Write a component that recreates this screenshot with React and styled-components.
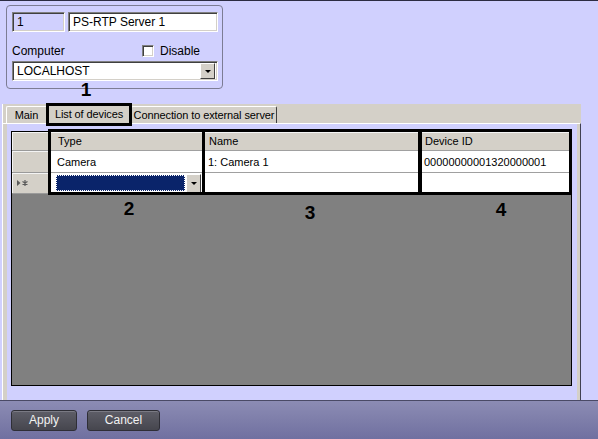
import React from 'react'
import styled, { createGlobalStyle } from 'styled-components'

const GlobalStyle = createGlobalStyle`
  html, body {
    margin: 0;
    padding: 0;
    background: #d0d0fe;
  }
  body {
    font-family: "Liberation Sans", Arial, sans-serif;
    font-size: 11px;
    color: #000;
  }
`

const columns = [
    { key: 'type', title: 'Type', width: 153, pad: 7 },
    { key: 'name', title: 'Name', width: 217, pad: 5 },
    { key: 'id', title: 'Device ID', width: 150, pad: 4 },
]

const rows = [
    { type: 'Camera', name: '1: Camera 1', id: '00000000001320000001' },
]

const tabs = [
    { title: 'Main', width: 41 },
    { title: 'List of devices', width: 84, active: true },
    { title: 'Connection to external server', width: 146 },
]

const App = () => {
    return <Window>
        <GlobalStyle />
        <Body>
            <GroupBox>
                <FieldRow>
                    <TextField w={53} disabled>1</TextField>
                    <TextField w={150}>PS-RTP Server 1</TextField>
                </FieldRow>
                <CheckRow>
                    <Label>Computer</Label>
                    <CheckBox />
                    <span>Disable</span>
                </CheckRow>
                <Combo>
                    <ComboText>LOCALHOST</ComboText>
                    <DropButton h={16}><Arrow /></DropButton>
                </Combo>
            </GroupBox>
            <Callout x={80} y={79}>1</Callout>

            <TabControl>
                <TabStrip>
                    {tabs.map(t => <Tab key={t.title} w={t.width} active={t.active} last={t.title.startsWith('Conn')}>{t.title}</Tab>)}
                </TabStrip>
                <TabMark />
                <TabPage>
                    <Grid>
                        <GridTable>
                            <RowHead header />
                            {columns.map(c => <HeadCell key={c.key} pad={c.pad}>{c.title}</HeadCell>)}

                            {rows.map((r, i) => <React.Fragment key={i}>
                                <RowHead />
                                {columns.map(c => <Cell key={c.key} pad={c.pad}>{r[c.key]}</Cell>)}
                            </React.Fragment>)}

                            <RowHead last>
                                <svg width="12" height="8" viewBox="0 0 12 8">
                                    <path d="M0 1 L3.5 4 L0 7 Z" fill="#5a5a5a" />
                                    <path d="M8 1 V7 M5.5 2.5 L10.5 5.5 M10.5 2.5 L5.5 5.5" stroke="#5a5a5a" strokeWidth="1.2" />
                                </svg>
                            </RowHead>
                            <EditCell>
                                <EditBox />
                                <DropButton h={19}><Arrow /></DropButton>
                            </EditCell>
                            <Cell last />
                            <Cell last />
                        </GridTable>

                        <ColumnMark x={36} w={157} />
                        <ColumnMark x={190} w={220} />
                        <ColumnMark x={406} w={154} />
                        <Callout x={111} y={67}>2</Callout>
                        <Callout x={292} y={71}>3</Callout>
                        <Callout x={483} y={68}>4</Callout>
                    </Grid>
                </TabPage>
            </TabControl>
        </Body>

        <ButtonBar>
            <Btn w={66}>Apply</Btn>
            <Btn w={73}>Cancel</Btn>
        </ButtonBar>
    </Window>
}

const Window = styled.div`
            width: 598px;
            height: 439px;
            box-sizing: border-box;
            border-top: 1px solid #2c2c42;
            background: #d0d0fe;
            display: flex;
            flex-direction: column;
            overflow: hidden;
`

const Body = styled.div`
            flex: 1;
            position: relative;
            display: flex;
            flex-direction: column;
            align-items: flex-start;
            padding: 4px 0 0 2px;
            min-height: 0;
`

const GroupBox = styled.div`
            box-sizing: border-box;
            margin-left: 4px;
            width: 217px;
            height: 84px;
            border: 1px solid #7c7c94;
            border-radius: 4px;
            padding: 6px 0 0 5px;
            display: flex;
            flex-direction: column;
`

const FieldRow = styled.div`
            display: flex;
            gap: 3px;
`

const sunken = `
            border: 1px solid;
            border-color: #808080 #ffffff #ffffff #808080;
            box-shadow: inset 1px 1px 0 #404040, inset -1px -1px 0 #d4d0c8;
`

const TextField = styled.div`
            box-sizing: border-box;
            width: ${p => p.w}px;
            height: 20px;
            ${sunken}
            background: ${p => p.disabled ? '#d0d0fe' : '#ffffff'};
            padding: 0 0 0 4px;
            line-height: 18px;
            font-size: 12px;
`

const CheckRow = styled.div`
            display: flex;
            align-items: center;
            height: 16px;
            margin-top: 11px;
            font-size: 12px;
`

const Label = styled.span`
            width: 130px;
            flex-shrink: 0;
`

const CheckBox = styled.span`
            box-sizing: border-box;
            width: 12px;
            height: 12px;
            margin-right: 6px;
            background: #ffffff;
            ${sunken}
`

const Combo = styled.div`
            box-sizing: border-box;
            margin-top: 2px;
            width: 206px;
            height: 20px;
            ${sunken}
            background: #ffffff;
            display: flex;
            align-items: center;
            padding: 0 2px 0 4px;
`

const ComboText = styled.span`
            flex: 1;
            font-size: 12px;
`

const DropButton = styled.span`
            box-sizing: border-box;
            width: 15px;
            height: ${p => p.h}px;
            background: #d4d0c8;
            border: 1px solid;
            border-color: #ffffff #404040 #404040 #ffffff;
            display: flex;
            align-items: center;
            justify-content: center;
            flex-shrink: 0;
`

const Arrow = styled.span`
            width: 0;
            height: 0;
            border-left: 3px solid transparent;
            border-right: 3px solid transparent;
            border-top: 3px solid #000;
`

const Callout = styled.div`
            position: absolute;
            left: ${p => p.x}px;
            top: ${p => p.y}px;
            width: 12px;
            text-align: center;
            font-family: "Liberation Sans", Arial, sans-serif;
            font-weight: 700;
            font-size: 19px;
            line-height: 19px;
            color: #000;
            z-index: 3;
`

const TabControl = styled.div`
            position: relative;
            margin-top: 15px;
            width: 579px;
            flex: 1;
            display: flex;
            flex-direction: column;
`

const TabStrip = styled.div`
            height: 19px;
            flex-shrink: 0;
            box-sizing: border-box;
            background: #d4d0c8;
            border-left: 1px solid #ffffff;
            display: flex;
            align-items: flex-end;
            padding-left: 3px;
`

const Tab = styled.div`
            box-sizing: border-box;
            width: ${p => p.w}px;
            height: ${p => p.active ? 19 : 17}px;
            border-top: 1px solid #ffffff;
            border-left: 1px solid #ffffff;
            border-right: 1px solid ${p => p.last ? '#404040' : '#808080'};
            border-radius: 2px 2px 0 0;
            text-align: center;
            line-height: ${p => p.active ? 18 : 17}px;
            white-space: nowrap;
            letter-spacing: -0.1px;
`

const TabMark = styled.div`
            position: absolute;
            left: 44px;
            top: -1px;
            width: 86px;
            height: 23px;
            box-sizing: border-box;
            border: 3px solid #000;
            z-index: 2;
`

const TabPage = styled.div`
            flex: 1;
            display: flex;
            box-sizing: border-box;
            border-top: 1px solid #ffffff;
            border-left: 1px solid #ffffff;
            border-right: 1px solid #404052;
            box-shadow: inset 4px 0 0 #d4d0c8, inset -3px 0 0 #d4d0c8;
            padding: 7px 8px 14px 8px;
`

const Grid = styled.div`
            position: relative;
            flex: 1;
            box-sizing: border-box;
            width: 560px;
            border: 1px solid #000;
            background: #808080;
`

const GridTable = styled.div`
            display: grid;
            grid-template-columns: 38px 153px 217px 150px;
            grid-template-rows: 19px 22px 21px;
`

const cellBase = `
            box-sizing: border-box;
            border-right: 1px solid #a0a0a0;
            border-bottom: 1px solid #a0a0a0;
            white-space: nowrap;
            overflow: hidden;
            display: flex;
            align-items: center;
`

const RowHead = styled.div`
            ${cellBase}
            background: #d4d0c8;
            border-color: #9a9a9a;
            box-shadow: inset 1px 1px 0 #f4f4f4;
            padding-left: 5px;
`

const HeadCell = styled.div`
            ${cellBase}
            background: #d4d0c8;
            box-shadow: inset 1px 1px 0 #f4f4f4;
            padding-left: ${p => p.pad + 1}px;
`

const Cell = styled.div`
            ${cellBase}
            background: #ffffff;
            padding-left: ${p => p.pad}px;
`

const EditCell = styled.div`
            ${cellBase}
            background: #ffffff;
            padding: 0 1px 0 6px;
            gap: 1px;
`

const EditBox = styled.div`
            flex: 1;
            height: 16px;
            box-sizing: border-box;
            background: #0a246a;
            outline: 1px dotted #ffffff;
            outline-offset: -1px;
            border: 1px dotted #000;
`

const ColumnMark = styled.div`
            position: absolute;
            left: ${p => p.x}px;
            top: -3px;
            width: ${p => p.w}px;
            height: 66px;
            box-sizing: border-box;
            border: 3px solid #000;
            z-index: 2;
`

const ButtonBar = styled.div`
            height: 39px;
            flex-shrink: 0;
            box-sizing: border-box;
            border-top: 1px solid #4a4a66;
            background: linear-gradient(#8c8cb4, #7070a0);
            display: flex;
            align-items: flex-start;
            gap: 10px;
            padding: 9px 0 0 11px;
`

const Btn = styled.div`
            box-sizing: border-box;
            width: ${p => p.w}px;
            height: 21px;
            border: 1px solid #2e2e36;
            border-radius: 3px;
            background: linear-gradient(#5e5e68, #46464e);
            box-shadow: inset 0 1px 0 #7a7a84;
            color: #f2f2f2;
            font-size: 12px;
            text-align: center;
            line-height: 19px;
            cursor: pointer;
`

export default App
